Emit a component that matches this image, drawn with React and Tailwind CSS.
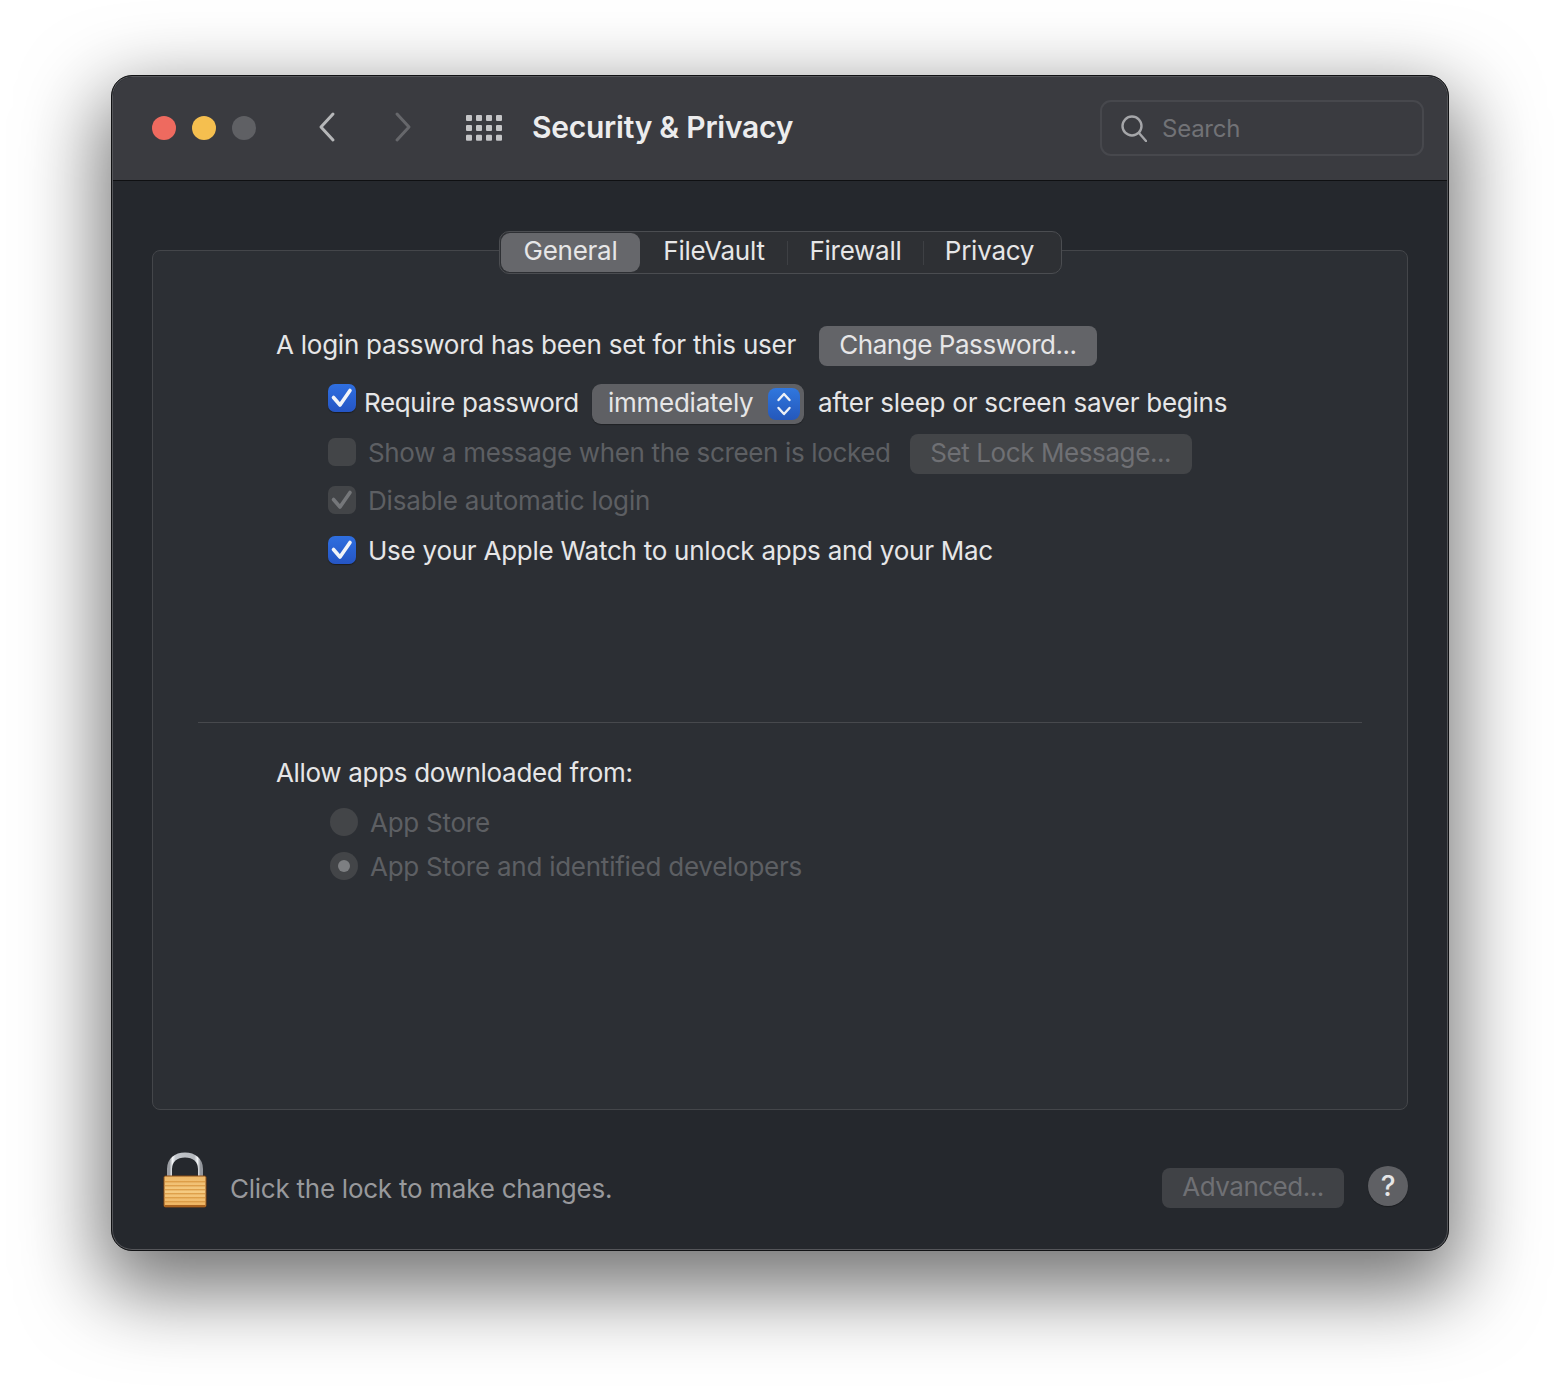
const font = "font-['Inter','Noto_Sans',sans-serif]";

function Tick({ color }) {
  return (
    <svg width="28" height="28" viewBox="0 0 28 28" fill="none" stroke={color} strokeWidth="3.6" strokeLinecap="round" strokeLinejoin="round">
      <path d="M5.5 13.5 L12 21 L22 6.5" />
    </svg>
  );
}

// blue or greyed out checkbox
function CheckBox({ state = "on", className = "" }) {
  if (state === "on") {
    return (
      <span className={`flex h-7 w-7 shrink-0 items-center justify-center rounded-[7px] bg-gradient-to-b from-[#2f6fe0] to-[#2555c4] shadow-[0_1px_1px_rgba(0,0,0,0.4)] ${className}`}>
        <Tick color="#f2f4f8" />
      </span>
    );
  }
  return (
    <span className={`flex h-7 w-7 shrink-0 items-center justify-center rounded-[7px] bg-[#434548] ${className}`}>
      {state === "dim" && <Tick color="#75777a" />}
    </span>
  );
}

function Radio({ selected }) {
  return (
    <span className="flex h-7 w-7 shrink-0 items-center justify-center rounded-full bg-[#434548]">
      {selected && <span className="h-3 w-3 rounded-full bg-[#7d7f82]" />}
    </span>
  );
}

function Lock() {
  return (
    <svg width="44" height="56" viewBox="0 0 44 56">
      <defs>
        <linearGradient id="shackle" x1="0" x2="1" y1="0" y2="0">
          <stop offset="0" stopColor="#9a9da2" />
          <stop offset="0.1" stopColor="#f6f8fa" />
          <stop offset="0.2" stopColor="#c3c7cc" />
          <stop offset="0.8" stopColor="#b4b8bd" />
          <stop offset="0.9" stopColor="#f2f4f6" />
          <stop offset="1" stopColor="#94979c" />
        </linearGradient>
        <linearGradient id="lockBody" x1="0" x2="0" y1="0" y2="1">
          <stop offset="0" stopColor="#edb767" />
          <stop offset="0.5" stopColor="#f5cb82" />
          <stop offset="1" stopColor="#eeb25e" />
        </linearGradient>
      </defs>
      <path d="M6.5 24 V17 C6.5 8 13 3 22 3 C31 3 37.5 8 37.5 17 V24" fill="none" stroke="url(#shackle)" strokeWidth="5" />
      <rect x="1" y="24" width="42" height="31" rx="1.5" fill="url(#lockBody)" stroke="#8a4d16" strokeWidth="1" />
      {[29, 33, 37, 41, 45, 49].map((y) => (
        <rect key={y} x="2" y={y} width="40" height="1.4" fill="#d8963f" opacity="0.8" />
      ))}
      <rect x="1.5" y="53" width="41" height="2" fill="#a8621f" />
    </svg>
  );
}

function AppsGrid() {
  const dots = [];
  for (let r = 0; r < 3; r++) {
    for (let c = 0; c < 4; c++) {
      dots.push(<rect key={`${r}-${c}`} x={c * 10} y={r * 9.9} width="6" height="6" rx="1" fill="#c4c5c7" />);
    }
  }
  return (
    <svg width="36" height="26" viewBox="0 0 36 26">
      {dots}
    </svg>
  );
}

export default function App() {
  return (
    <div className={`h-[1398px] w-[1560px] overflow-hidden bg-white pl-[111px] pt-[75px] tracking-[-0.25px] ${font}`}>
      <div className="flex h-[1176px] w-[1338px] flex-col rounded-[21px] border border-[#111214] bg-[#25282d] shadow-[0_30px_80px_10px_rgba(0,0,0,0.55),inset_0_0_0_1px_#55565a]">
        {/* title bar */}
        <div className="mx-px mt-px flex h-[104px] shrink-0 items-center rounded-t-[20px] border-b border-[#0f1012] bg-[#3a3b40] pb-[2px]">
          <div className="ml-[39px] flex gap-4">
            <span className="h-6 w-6 rounded-full bg-[#ee6a5f]" />
            <span className="h-6 w-6 rounded-full bg-[#f5bf4f]" />
            <span className="h-6 w-6 rounded-full bg-[#5f6064]" />
          </div>
          <svg width="20" height="32" viewBox="0 0 20 32" className="mb-[2px] ml-[61px]" fill="none" stroke="#b6b7b9" strokeWidth="3" strokeLinecap="round" strokeLinejoin="round">
            <path d="M16 3 L4 16 L16 29" />
          </svg>
          <svg width="20" height="32" viewBox="0 0 20 32" className="mb-[2px] ml-[56px]" fill="none" stroke="#66676b" strokeWidth="3" strokeLinecap="round" strokeLinejoin="round">
            <path d="M4 3 L16 16 L4 29" />
          </svg>
          <div className="ml-[53px] flex"><AppsGrid /></div>
          <span className="mb-[2px] ml-[30px] text-[30px] font-semibold leading-none tracking-[-0.25px] text-[#ececed]">Security &amp; Privacy</span>
          <div className="ml-auto mr-[23px] flex h-14 w-[324px] items-center rounded-[11px] border-2 border-[#47484d] pl-[19px]">
            <svg width="26" height="28" viewBox="0 0 26 28" fill="none" stroke="#a5a6a9" strokeWidth="2.4" strokeLinecap="round">
              <circle cx="11" cy="12" r="9.5" />
              <path d="M18 19 L25 27" />
            </svg>
            <span className="ml-[15px] mt-[3px] text-[24px] text-[#717276]">Search</span>
          </div>
        </div>

        {/* main */}
        <div className="mx-[40px] mt-[69px] h-[860px] rounded-[8px] border border-[#44464a] bg-[#2c2f34]">
          <div className="-mt-[20px] flex justify-center">
            <div className="flex h-[43px] w-[563px] items-center rounded-[10px] border border-[#4b4d51] bg-[#2e3034] pl-px text-[26px] text-[#e6e6e7]">
              <span className="flex h-[39px] w-[139px] items-center justify-center rounded-[9px] bg-[#66676b] pb-1 pl-px">General</span>
              <span className="flex w-[147px] justify-center pb-1 pl-[2px]">FileVault</span>
              <span className="h-6 w-px bg-[#3e4044]" />
              <span className="flex w-[135px] justify-center pb-1 pl-px">Firewall</span>
              <span className="h-6 w-px bg-[#3e4044]" />
              <span className="flex flex-1 justify-center pb-1 pr-[5px]">Privacy</span>
            </div>
          </div>

          <div className="pl-[123px] text-[26px]">
            <div className="mt-[52px] flex h-10 items-center text-[#e6e6e7]">
              <span className="pb-1">A login password has been set for this user</span>
              <span className="ml-[23px] flex h-10 w-[278px] items-center justify-center rounded-[8px] bg-[#636468] pb-1 tracking-[-0.45px]">Change Password...</span>
            </div>

            <div className="ml-[52px] mt-[18px] flex h-10 items-center text-[#e6e6e7]">
              <CheckBox className="-mt-[12px]" />
              <span className="ml-2 pb-1 tracking-[-0.37px]">Require password</span>
              <span className="ml-[13px] flex h-10 w-[212px] items-center justify-between rounded-[9px] bg-[#5f6064] pl-4 pr-1 shadow-[0_1px_1px_rgba(0,0,0,0.3)]">
                <span className="pb-1">immediately</span>
                <span className="flex h-8 w-8 items-center justify-center rounded-[8px] bg-gradient-to-b from-[#3077de] to-[#2558bb]">
                  <svg width="16" height="28" viewBox="0 0 16 28" fill="none" stroke="#eef1f6" strokeWidth="2.4" strokeLinecap="round" strokeLinejoin="round">
                    <path d="M2.5 10 L8 4 L13.5 10" />
                    <path d="M2.5 18 L8 24 L13.5 18" />
                  </svg>
                </span>
              </span>
              <span className="ml-[14px] pb-1">after sleep or screen saver begins</span>
            </div>

            <div className="ml-[52px] mt-[10px] flex h-10 items-center text-[#5d5f63]">
              <CheckBox state="off" className="-mt-[4px]" />
              <span className="ml-3 pb-1 tracking-[-0.35px]">Show a message when the screen is locked</span>
              <span className="ml-[19px] flex h-10 w-[282px] items-center justify-center rounded-[8px] bg-[#434548] pb-1 tracking-[-0.4px] text-[#6f7074]">Set Lock Message...</span>
            </div>

            <div className="ml-[52px] mt-[13px] flex h-7 items-center text-[#5d5f63]">
              <CheckBox state="dim" className="-mt-[2px]" />
              <span className="ml-3 pb-[2px] tracking-[-0.15px]">Disable automatic login</span>
            </div>

            <div className="ml-[52px] mt-[22px] flex h-7 items-center text-[#e6e6e7]">
              <CheckBox className="-mt-[2px]" />
              <span className="ml-3 pb-[2px]">Use your Apple Watch to unlock apps and your Mac</span>
            </div>
          </div>

          <div className="mx-[45px] mt-[157px] h-px bg-[#47494d]" />

          <div className="pl-[123px] text-[26px]">
            <div className="mt-[36px] flex h-7 items-center pb-[2px] tracking-[-0.32px] text-[#e6e6e7]">Allow apps downloaded from:</div>
            <div className="ml-[54px] mt-[21px] flex h-7 items-center text-[#5d5f63]">
              <Radio />
              <span className="ml-3">App Store</span>
            </div>
            <div className="ml-[54px] mt-4 flex h-7 items-center text-[#5d5f63]">
              <Radio selected />
              <span className="ml-3">App Store and identified developers</span>
            </div>
          </div>
        </div>

        {/* footer */}
        <div className="flex flex-1 items-start pl-[51px] pr-[40px] pt-[42px]">
          <Lock />
          <span className="ml-[23px] mt-[21px] text-[26px] leading-[32px] text-[#98999c]">Click the lock to make changes.</span>
          <span className="ml-auto mt-[16px] flex h-10 w-[182px] items-center justify-center rounded-[8px] bg-[#404246] pb-1 text-[26px] tracking-[-0.5px] text-[#6f7074]">Advanced...</span>
          <span className="ml-6 mt-[14px] flex h-10 w-10 items-center justify-center rounded-full bg-[#5f6064] text-[28px] font-medium text-[#e6e6e7] shadow-[0_1px_1px_rgba(0,0,0,0.3)]">?</span>
        </div>
      </div>
    </div>
  );
}
